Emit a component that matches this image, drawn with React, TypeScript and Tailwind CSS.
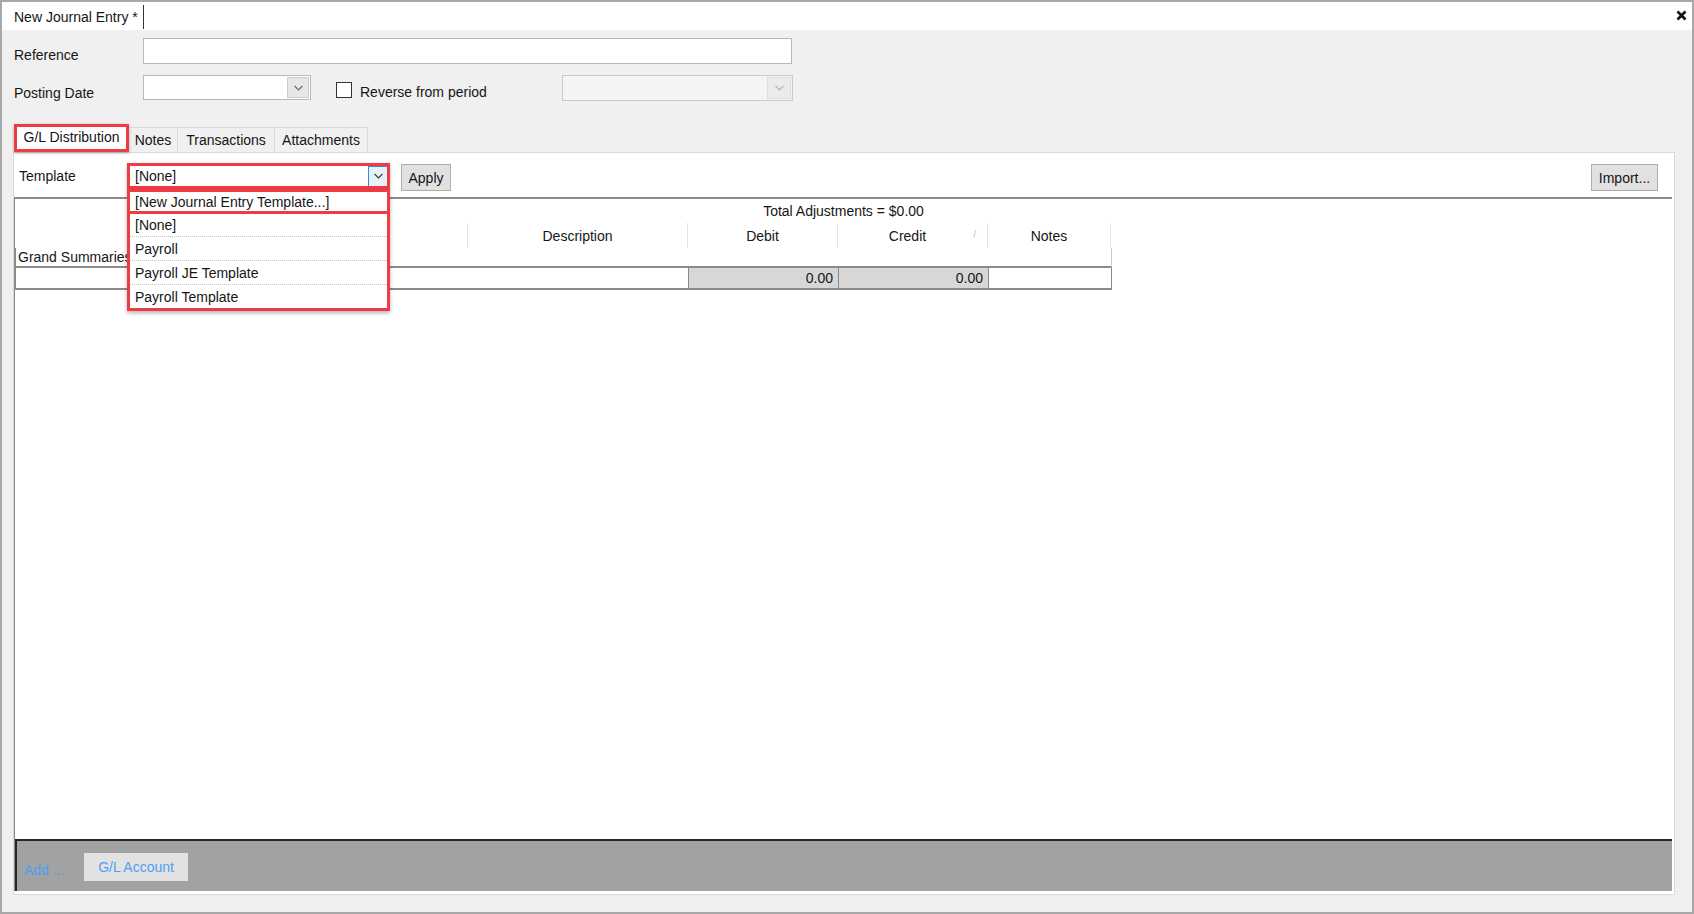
import React from "react";

const Chevron = ({ color = "#444" }: { color?: string }) => (
  <svg width="9" height="6" viewBox="0 0 9 6" fill="none">
    <path d="M0.5 0.8 L4.5 4.8 L8.5 0.8" stroke={color} strokeWidth="1.2" />
  </svg>
);

const templates = ["[None]", "Payroll", "Payroll JE Template", "Payroll Template"];

const columns = [
  { name: "", width: "w-[452px]" },
  { name: "Description", width: "w-[220px]" },
  { name: "Debit", width: "w-[150px]" },
  { name: "Credit", width: "w-[150px] pr-[10px]" },
  { name: "Notes", width: "w-[124px]" },
];

const App = () => {
  return (
    <div className="w-[1694px] h-[914px] border-2 border-[#a8a8a8] bg-[#f0f0f0] flex flex-col overflow-hidden font-['Liberation_Sans',Arial,sans-serif] text-[14px] leading-[16px] text-[#151515]">
      {/* document tab strip */}
      <div className="h-[28px] shrink-0 bg-white flex items-start relative">
        <div className="ml-[5px] mt-[3px] h-[24px] pl-[7px] pr-[5px] flex items-center border-r-[1.5px] border-[#333]">
          New Journal Entry *
        </div>
        <div className="absolute right-[5px] top-[8px]">
          <svg width="11" height="11" viewBox="0 0 11 11">
            <path d="M1.5 1.5 L9.5 9.5 M9.5 1.5 L1.5 9.5" stroke="#111" strokeWidth="2.6" />
          </svg>
        </div>
      </div>

      {/* header fields */}
      <div className="shrink-0 px-[12px] pt-[8px]">
        <div className="flex h-[26px]">
          <div className="w-[129px] pt-[9px]">Reference</div>
          <div className="w-[649px] h-[26px] bg-white border border-[#b8b8b8]" />
        </div>
        <div className="flex items-start mt-[11px] h-[26px]">
          <div className="w-[129px] pt-[10px]">Posting Date</div>
          <div className="w-[168px] h-[25px] bg-white border border-[#b8b8b8] flex justify-end p-[1px]">
            <div className="w-[22px] h-full bg-[#e6e6e6] border border-[#cdcdcd] flex items-center justify-center">
              <Chevron color="#666" />
            </div>
          </div>
          <div className="ml-[25px] mt-[7px] w-[16px] h-[16px] border border-[#333] bg-white" />
          <div className="ml-[8px] pt-[9px] w-[202px]">Reverse from period</div>
          <div className="w-[231px] h-[26px] bg-[#f4f4f4] border border-[#cacaca] flex justify-end p-[1px]">
            <div className="w-[24px] h-full bg-[#ebebeb] border border-[#dcdcdc] flex items-center justify-center">
              <Chevron color="#b0b0b0" />
            </div>
          </div>
        </div>
      </div>

      {/* tab control */}
      <div className="flex-1 flex flex-col pl-[11px] mt-[23px] mb-[17px] min-h-0">
        <div className="flex items-end h-[28px] shrink-0 pl-[1px]">
          <div className="relative w-[115px] h-[28px] bg-white flex items-center justify-center pb-[2px]">
            G/L Distribution
            <span className="absolute inset-0 border-[3px] border-[#ee3b44] shadow-[0_1px_3px_rgba(0,0,0,0.3)]" />
          </div>
          <div className="w-[49px] h-[25px] flex items-center justify-center border-t border-r border-[#d9d9d9]">
            Notes
          </div>
          <div className="w-[97px] h-[25px] flex items-center justify-center border-t border-r border-[#d9d9d9]">
            Transactions
          </div>
          <div className="w-[93px] h-[25px] flex items-center justify-center border-t border-r border-[#d9d9d9]">
            Attachments
          </div>
        </div>

        <div className="w-[1662px] flex-1 bg-white border border-[#d9d9d9] flex flex-col min-h-0">
          {/* template row */}
          <div className="flex items-start h-[27px] mt-[11px] shrink-0">
            <div className="w-[116px] pl-[5px] pt-[4px]">Template</div>
            <div className="relative mt-[1px] w-[258px] h-[22px] bg-white flex items-center">
              <span className="pl-[5px] flex-1">[None]</span>
              <div className="w-[20px] h-[21px] bg-[#e5f1fb] border border-[#3f86d0] flex items-center justify-center">
                <Chevron color="#333" />
              </div>
              <span className="absolute left-[-3px] right-[-2px] top-[-2px] bottom-[-2px] border-[3px] border-[#ee3b44] shadow-[0_1px_3px_rgba(0,0,0,0.3)]" />

              {/* open list */}
              <div className="absolute left-[-3px] right-[-2px] top-[24px] z-10 bg-white border-[3px] border-[#ee3b44] shadow-[0_2px_4px_rgba(0,0,0,0.3)] flex flex-col">
                <div className="h-[22px] pl-[5px] flex items-center border-b-[3px] border-[#ee3b44]">
                  [New Journal Entry Template...]
                </div>
                {templates.map((t, i) => (
                  <div
                    key={t}
                    className={
                      i === 0
                        ? "h-[22px] pl-[5px] flex items-center"
                        : "h-[24px] pl-[5px] flex items-center border-t border-dotted border-[#c4c4c4]"
                    }
                  >
                    {t}
                  </div>
                ))}
              </div>
            </div>
            <div className="ml-[13px] w-[50px] h-[27px] bg-[#e1e1e1] border border-[#adadad] flex items-center justify-center">
              Apply
            </div>
            <div className="ml-auto mr-[16px] w-[67px] h-[27px] bg-[#e1e1e1] border border-[#adadad] flex items-center justify-center">
              Import...
            </div>
          </div>

          {/* grid */}
          <div className="mt-[6px] mr-[2px] mb-[3px] flex-1 flex flex-col border-t-2 border-l border-[#8a8a8a] min-h-0">
            <div className="h-[24px] shrink-0 flex items-center justify-center">Total Adjustments = $0.00</div>
            <div className="h-[25px] shrink-0 flex">
              {columns.map((c, i) => (
                <div
                  key={i}
                  className={
                    c.width +
                    " relative flex items-center justify-center " +
                    (i === 0 ? "" : "border-l border-[#e4e4e4] ") +
                    (i === 4 ? "border-r" : "")
                  }
                >
                  {c.name}
                  {c.name === "Credit" && (
                    <span className="absolute right-[11px] top-[3px] text-[9px] text-[#b5b5b5]">/</span>
                  )}
                </div>
              ))}
            </div>
            <div className="w-[1097px] h-[20px] shrink-0 border-l border-r border-b-2 border-l-[#8a8a8a] border-r-[#c8c8c8] border-b-[#8a8a8a] flex items-center pl-[2px]">
              Grand Summaries
            </div>
            <div className="w-[1097px] h-[22px] shrink-0 flex border-l border-r border-b-2 border-[#8a8a8a]">
              <div className="w-[672px] bg-white" />
              <div className="w-[150px] bg-[#d7d7d7] border-l border-[#8a8a8a] flex items-center justify-end pr-[5px]">0.00</div>
              <div className="w-[150px] bg-[#d7d7d7] border-l border-[#8a8a8a] flex items-center justify-end pr-[5px]">0.00</div>
              <div className="flex-1 bg-white border-l border-[#8a8a8a]" />
            </div>
            <div className="flex-1" />
            <div className="h-[52px] shrink-0 bg-[#a2a2a2] border-t-2 border-l-2 border-[#262626] flex items-center pt-[2px]">
              <div className="w-[67px] pl-[7px] pt-[5px] text-[#4d9ff5]">Add ...</div>
              <div className="w-[104px] h-[28px] bg-[#e2e2e2] flex items-center justify-center text-[#4d9ff5]">
                G/L Account
              </div>
            </div>
          </div>
        </div>
      </div>
    </div>
  );
};

export default App;
